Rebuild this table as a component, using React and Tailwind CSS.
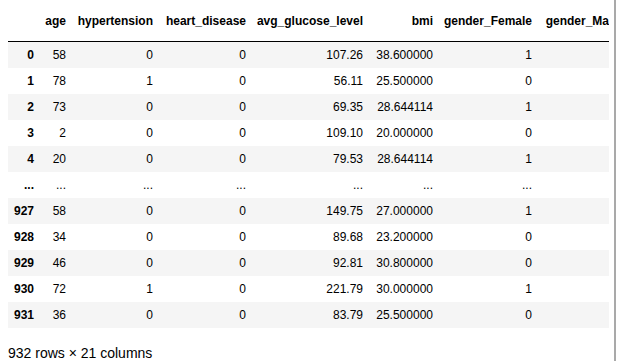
import React from 'react';

const columns = [
  { key: 'idx', label: '', w: 'w-[32px]' },
  { key: 'age', label: 'age', w: 'w-[32px]' },
  { key: 'hyp', label: 'hypertension', w: 'w-[87px]' },
  { key: 'heart', label: 'heart_disease', w: 'w-[93px]' },
  { key: 'glu', label: 'avg_glucose_level', w: 'w-[117px]' },
  { key: 'bmi', label: 'bmi', w: 'w-[70px]' },
  { key: 'gf', label: 'gender_Female', w: 'w-[99px]' },
  { key: 'gm', label: 'gender_Male', w: 'w-[87px]' },
  { key: 'go', label: 'gender_Other', w: 'w-[92px]' },
];

const rows = [
  ['0', '58', '0', '0', '107.26', '38.600000', '1', '0', '0'],
  ['1', '78', '1', '0', '56.11', '25.500000', '0', '1', '0'],
  ['2', '73', '0', '0', '69.35', '28.644114', '1', '0', '0'],
  ['3', '2', '0', '0', '109.10', '20.000000', '0', '1', '0'],
  ['4', '20', '0', '0', '79.53', '28.644114', '1', '0', '0'],
  ['...', '...', '...', '...', '...', '...', '...', '...', '...'],
  ['927', '58', '0', '0', '149.75', '27.000000', '1', '0', '0'],
  ['928', '34', '0', '0', '89.68', '23.200000', '0', '1', '0'],
  ['929', '46', '0', '0', '92.81', '30.800000', '0', '1', '0'],
  ['930', '72', '1', '0', '221.79', '30.000000', '1', '0', '0'],
  ['931', '36', '0', '0', '83.79', '25.500000', '0', '1', '0'],
];

const App = () => {
  return (
    <div className="flex h-[361px] w-[621px] overflow-hidden bg-white text-black font-['Liberation_Sans',Arial,sans-serif]">
      <div className="w-[614px] shrink-0 pl-2">
        {/* dataframe */}
        <div className="w-[601px] overflow-hidden">
          <div className="flex w-max h-[42px] border-b border-black text-[12px] font-bold">
            {columns.map((c) => (
              <div key={c.key} className={`${c.w} shrink-0 flex items-center justify-end pr-[6px] whitespace-nowrap`}>
                {c.label}
              </div>
            ))}
          </div>
          {rows.map((r, i) => (
            <div key={i} className={`flex w-max h-[26px] text-[12px] ${i % 2 === 0 ? 'bg-[#f5f5f5]' : 'bg-white'}`}>
              {r.map((v, j) => (
                <div
                  key={j}
                  className={`${columns[j].w} shrink-0 flex items-center justify-end pr-[6px] whitespace-nowrap ${j === 0 ? 'font-bold' : ''}`}
                >
                  {v}
                </div>
              ))}
            </div>
          ))}
        </div>
        <p className="mt-[17px] text-[14px] leading-[16px]">932 rows × 21 columns</p>
      </div>
      <div className="w-[2px] shrink-0 bg-[#a9a9a9]" />
    </div>
  );
};

export default App;
